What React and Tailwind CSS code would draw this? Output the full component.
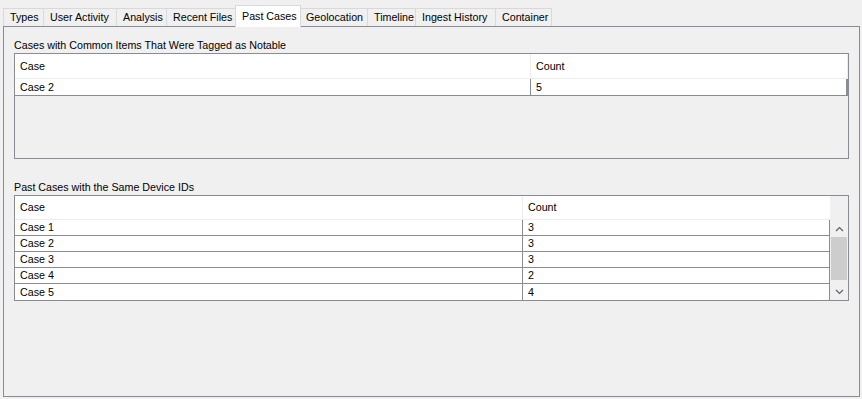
const tabs = ["Types", "User Activity", "Analysis", "Recent Files", "Past Cases", "Geolocation", "Timeline", "Ingest History", "Container"];
const tabWidths = [41, 73, 50, 69, 64, 68, 48, 80, 56];

const deviceRows = [
  ["Case 1", "3"],
  ["Case 2", "3"],
  ["Case 3", "3"],
  ["Case 4", "2"],
  ["Case 5", "4"],
];

function Tab({ label, width, active }) {
  if (active) {
    return (
      <div
        className="relative z-10 -mx-px -mb-px flex h-[22px] items-center whitespace-nowrap border border-b-0 border-[#d9d9d9] bg-white pl-[6px]"
        style={{ width: width + 2 }}
      >
        {label}
      </div>
    );
  }
  return (
    <div
      className="flex h-[18px] items-center whitespace-nowrap border border-b-0 border-l-0 border-[#d9d9d9] bg-[#f0f0f0] pl-[6px] first:border-l"
      style={{ width }}
    >
      {label}
    </div>
  );
}

function ScrollBar() {
  return (
    <div className="flex w-[18px] flex-col bg-[#f0f0f0]">
      <div className="flex h-[17px] items-center justify-center">
        <svg width="9" height="6" viewBox="0 0 9 6">
          <path d="M1 5 L4.5 1.5 L8 5" fill="none" stroke="#606060" strokeWidth="1.2" />
        </svg>
      </div>
      <div className="mx-[1px] h-[43px] bg-[#cdcdcd]" />
      <div className="flex-1" />
      <div className="flex h-[17px] items-center justify-center">
        <svg width="9" height="6" viewBox="0 0 9 6">
          <path d="M1 1 L4.5 4.5 L8 1" fill="none" stroke="#606060" strokeWidth="1.2" />
        </svg>
      </div>
    </div>
  );
}

export default function App() {
  return (
    <div
      className="h-[399px] w-[862px] overflow-hidden bg-[#f0f0f0] text-[10.7px] text-black"
      style={{ fontFamily: "'Liberation Sans', Arial, sans-serif" }}
    >
      <div className="flex h-[26px] items-end pl-[3px]">
        {tabs.map((t, i) => (
          <Tab key={t} label={t} width={tabWidths[i]} active={t === "Past Cases"} />
        ))}
      </div>

      <div className="ml-[3px] h-[371px] w-[857px] border border-[#898c95] px-[10px]">
        <div className="pt-[10px] leading-[16px]">Cases with Common Items That Were Tagged as Notable</div>
        <div className="h-[106px] w-[835px] border border-[#898c95] bg-[#f0f0f0]">
          <div className="flex h-[25px] border-b border-[#ededed] bg-white">
            <div className="flex w-[516px] items-center border-r border-[#ededed] pl-[5px]">Case</div>
            <div className="flex flex-1 items-center border-r border-[#ededed] pl-[5px]">Count</div>
          </div>
          <div className="flex h-[17px] border-b border-[#898c95] bg-white">
            <div className="flex w-[516px] items-center border-r border-[#898c95] pl-[5px]">Case 2</div>
            <div className="flex flex-1 items-center border-r-2 border-[#898c95] pl-[5px]">5</div>
          </div>
        </div>

        <div className="mt-[20px] leading-[16px]">Past Cases with the Same Device IDs</div>
        <div className="flex h-[106px] w-[835px] flex-col border border-[#898c95] bg-[#f0f0f0]">
          <div className="flex h-[25px]">
            <div className="flex flex-1 border-b border-[#ededed] bg-white">
              <div className="flex w-[508px] items-center border-r border-[#ededed] pl-[5px]">Case</div>
              <div className="flex flex-1 items-center pl-[5px]">Count</div>
            </div>
            <div className="w-[18px] bg-[#f0f0f0]" />
          </div>
          <div className="flex flex-1">
            <div className="flex flex-1 flex-col bg-white">
              {deviceRows.map(([c, n], i) => (
                <div
                  key={c}
                  className={`flex h-[16px] ${i < deviceRows.length - 1 ? "border-b border-[#898c95]" : ""}`}
                >
                  <div className="flex w-[508px] items-center border-r border-[#898c95] pl-[5px]">{c}</div>
                  <div className="flex flex-1 items-center border-r border-[#898c95] pl-[5px]">{n}</div>
                </div>
              ))}
            </div>
            <ScrollBar />
          </div>
        </div>
      </div>
    </div>
  );
}
